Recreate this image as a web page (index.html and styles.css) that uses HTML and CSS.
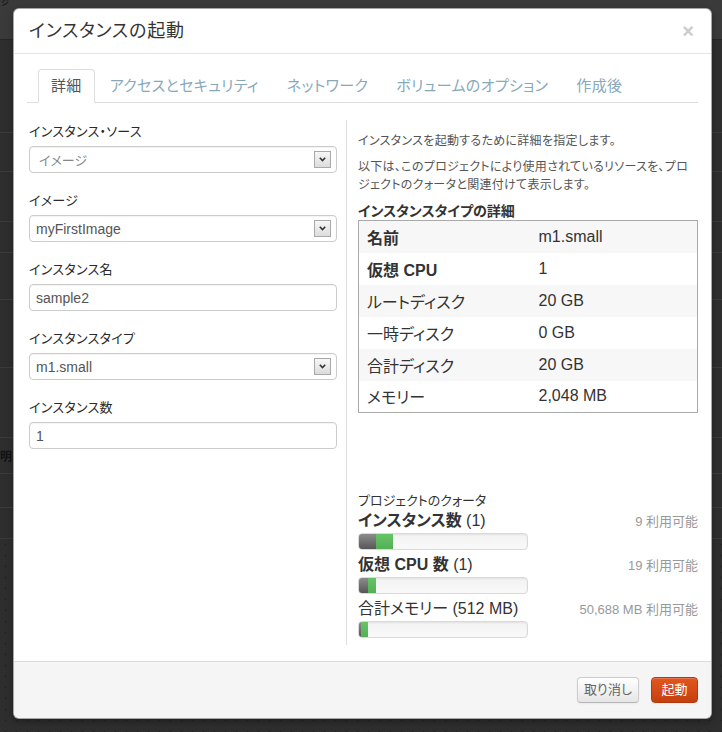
FILE: index.html
```html
<!DOCTYPE html>
<html lang="ja">
<head>
<meta charset="utf-8">
<title>インスタンスの起動</title>
<link rel="stylesheet" href="styles.css">
</head>
<body>
<div class="page">
  <div class="page-head"><span class="page-head-title">ジ</span></div>
  <div class="page-row r1"></div>
  <div class="page-row r2"></div>
  <div class="page-row r3"></div>
  <div class="page-row r4"></div>
  <div class="page-row r5"></div>
  <div class="page-row r6"></div>
  <div class="page-row r7"></div>
  <div class="page-row r8"><span class="page-cell">明</span></div>
  <div class="page-row r9"></div>
  <div class="page-row r10"></div>
  <div class="page-dots"></div>
</div>

<div class="modal">
  <div class="modal-header">
    <h3 class="modal-title">インスタンスの起動</h3>
    <span class="close">×</span>
  </div>
  <div class="modal-body">
    <ul class="tabs">
      <li class="tab active">詳細</li>
      <li class="tab">アクセスとセキュリティ</li>
      <li class="tab">ネットワーク</li>
      <li class="tab">ボリュームのオプション</li>
      <li class="tab">作成後</li>
    </ul>
    <div class="tab-content">
      <div class="col-left">
        <div class="field">
          <label class="field-label">インスタンス・ソース</label>
          <div class="select"><span class="select-value muted">イメージ</span><span class="select-btn"><svg width="7" height="5" viewBox="0 0 7 5"><path d="M0.8 0.8 L3.5 3.6 L6.2 0.8" fill="none" stroke="#333" stroke-width="1.6"/></svg></span></div>
        </div>
        <div class="field">
          <label class="field-label">イメージ</label>
          <div class="select"><span class="select-value">myFirstImage</span><span class="select-btn"><svg width="7" height="5" viewBox="0 0 7 5"><path d="M0.8 0.8 L3.5 3.6 L6.2 0.8" fill="none" stroke="#333" stroke-width="1.6"/></svg></span></div>
        </div>
        <div class="field">
          <label class="field-label">インスタンス名</label>
          <input class="text-input" type="text" value="sample2">
        </div>
        <div class="field">
          <label class="field-label">インスタンスタイプ</label>
          <div class="select"><span class="select-value">m1.small</span><span class="select-btn"><svg width="7" height="5" viewBox="0 0 7 5"><path d="M0.8 0.8 L3.5 3.6 L6.2 0.8" fill="none" stroke="#333" stroke-width="1.6"/></svg></span></div>
        </div>
        <div class="field">
          <label class="field-label">インスタンス数</label>
          <input class="text-input" type="text" value="1">
        </div>
      </div>
      <div class="col-right">
        <p class="desc">インスタンスを起動するために詳細を指定します。</p>
        <p class="desc">以下は、このプロジェクトにより使用されているリソースを、プロ<br>ジェクトのクォータと関連付けて表示します。</p>
        <h4 class="detail-title">インスタンスタイプの詳細</h4>
        <table class="spec-table">
          <colgroup><col class="spec-col"><col></colgroup>
          <tr><th class="strong">名前</th><td>m1.small</td></tr>
          <tr><th class="strong">仮想 CPU</th><td>1</td></tr>
          <tr><th>ルートディスク</th><td>20 GB</td></tr>
          <tr><th>一時ディスク</th><td>0 GB</td></tr>
          <tr><th>合計ディスク</th><td>20 GB</td></tr>
          <tr><th>メモリー</th><td>2,048 MB</td></tr>
        </table>
        <div class="quota">
          <div class="quota-title">プロジェクトのクォータ</div>
          <div class="quota-item">
            <div class="quota-row"><span class="quota-label"><strong>インスタンス数</strong> (1)</span><span class="quota-avail">9 利用可能</span></div>
            <div class="bar"><span class="bar-used" style="width:17px"></span><span class="bar-new" style="width:17px"></span></div>
          </div>
          <div class="quota-item">
            <div class="quota-row"><span class="quota-label"><strong>仮想 CPU 数</strong> (1)</span><span class="quota-avail">19 利用可能</span></div>
            <div class="bar"><span class="bar-used" style="width:9px"></span><span class="bar-new" style="width:8px"></span></div>
          </div>
          <div class="quota-item">
            <div class="quota-row"><span class="quota-label">合計メモリー (512 MB)</span><span class="quota-avail">50,688 MB 利用可能</span></div>
            <div class="bar"><span class="bar-used" style="width:2px"></span><span class="bar-new" style="width:7px"></span></div>
          </div>
        </div>
      </div>
    </div>
  </div>
  <div class="modal-footer">
    <button class="btn btn-cancel" type="button">取り消し</button>
    <button class="btn btn-primary" type="button">起動</button>
  </div>
</div>
</body>
</html>
```

FILE: styles.css
```css
* { box-sizing: border-box; }

html, body {
  margin: 0;
  padding: 0;
}

body {
  position: relative;
  width: 722px;
  height: 732px;
  overflow: hidden;
  background: #2e2e2e;
  font-family: "Liberation Sans", "Noto Sans CJK JP", sans-serif;
  font-size: 13px;
  color: #333;
  font-feature-settings: "palt";
}

/* underlying page, dimmed */
.page {
  height: 732px;
  display: flex;
  flex-direction: column;
}
.page-head {
  height: 40px;
  background: #3a3a3a;
  border-bottom: 1px solid #262626;
  padding-left: 1px;
}
.page-head-title {
  display: block;
  font-size: 8px;
  line-height: 8px;
  color: #1c1c1c;
  font-weight: bold;
}
.page-row {
  border-bottom: 1px solid #3b3b3b;
  display: flex;
  align-items: center;
}
.r1 { height: 93px; }
.r2 { height: 39px; }
.r3 { height: 50px; }
.r4 { height: 31px; }
.r5 { height: 47px; }
.r6 { height: 68px; }
.r7 { height: 70px; }
.r8 { height: 36px; }
.r9 { height: 34px; }
.r10 { height: 31px; }
.page-cell {
  font-size: 12px;
  font-weight: bold;
  color: #121212;
  padding-left: 0;
}
.page-dots {
  flex: 1;
  background-image: radial-gradient(circle, #232323 0.8px, transparent 1.2px);
  background-size: 11px 11px;
}

/* modal */
.modal {
  position: absolute;
  left: 13px;
  top: 8px;
  width: 699px;
  height: 711px;
  background: #fff;
  border: 1px solid rgba(0, 0, 0, 0.35);
  border-radius: 6px;
  box-shadow: 0 3px 7px rgba(0, 0, 0, 0.3);
  display: flex;
  flex-direction: column;
}

.modal-header {
  height: 45px;
  padding: 0 15px;
  border-bottom: 1px solid #e5e5e5;
  display: flex;
  align-items: center;
  justify-content: space-between;
}
.modal-title {
  margin: 0;
  font-size: 18px;
  font-weight: normal;
  line-height: 30px;
  letter-spacing: 0.8px;
  color: #333;
}
.close {
  font-size: 20px;
  font-weight: bold;
  line-height: 20px;
  color: #000;
  opacity: 0.2;
  margin-right: 2px;
}

.modal-body {
  flex: 1;
  padding: 15px 13px 16px;
  display: flex;
  flex-direction: column;
}

.tabs {
  list-style: none;
  margin: 0;
  padding: 0 0 0 11px;
  display: flex;
  border-bottom: 1px solid #ddd;
}
.tab {
  margin-right: 2px;
  margin-bottom: -1px;
  padding: 7px 12px;
  line-height: 18px;
  font-size: 15px;
  letter-spacing: 0.35px;
  color: #87a9ba;
  border: 1px solid transparent;
  border-radius: 4px 4px 0 0;
}
.tab.active {
  color: #555;
  background: #fff;
  border-color: #ddd #ddd transparent;
}

.tab-content {
  flex: 1;
  margin-top: 17px;
  display: flex;
}

.col-left {
  width: 319px;
  padding: 2px 0 0 2px;
}
.field {
  width: 308px;
  margin-bottom: 18px;
}
.field-label {
  display: block;
  font-size: 13px;
  line-height: 20px;
  margin-bottom: 4px;
  letter-spacing: 0.3px;
  color: #2a2a2a;
}
.select {
  height: 27px;
  border: 1px solid #ccc;
  border-radius: 4px;
  background: #fff;
  display: flex;
  align-items: center;
  justify-content: space-between;
  padding-left: 6px;
  box-shadow: inset 0 1px 1px rgba(0, 0, 0, 0.05);
}
.select-value {
  font-size: 14px;
  color: #555;
}
.select-value.muted {
  font-size: 13px;
  color: #888;
  padding-left: 3px;
}
.select-btn {
  width: 17px;
  height: 17px;
  margin-right: 5px;
  border: 1px solid #a9a9a9;
  background: linear-gradient(#f7f7f7, #dcdcdc);
  display: flex;
  align-items: center;
  justify-content: center;
}
.select-btn svg { display: block; }

.text-input {
  display: block;
  width: 308px;
  height: 27px;
  margin: 0;
  padding: 0 6px;
  border: 1px solid #ccc;
  border-radius: 4px;
  font-family: inherit;
  font-size: 14px;
  color: #555;
  background: #fff;
  box-shadow: inset 0 1px 1px rgba(0, 0, 0, 0.05);
  outline: none;
}

.col-right {
  flex: 1;
  border-left: 1px solid #ddd;
  padding: 12px 0 7px 11px;
  display: flex;
  flex-direction: column;
}
.desc {
  margin: 0 0 8px;
  font-size: 12px;
  line-height: 18px;
  letter-spacing: 0.3px;
  white-space: nowrap;
  color: #555;
}
.detail-title {
  margin: 0;
  font-size: 14px;
  line-height: 18px;
  font-weight: bold;
  color: #333;
}
.spec-table {
  width: 100%;
  border-collapse: collapse;
  border: 1px solid #aaa;
  font-size: 16px;
}
.spec-col { width: 172px; }
.spec-table tr { height: 32px; }
.spec-table tr:nth-child(odd) { background: #f7f7f7; }
.spec-table th,
.spec-table td {
  padding: 0 8px;
  text-align: left;
  font-weight: normal;
  color: #333;
}
.spec-table th.strong { font-weight: bold; }

.quota {
  margin-top: auto;
}
.quota-title {
  font-size: 13px;
  line-height: 16px;
  margin-bottom: 1px;
  color: #333;
}
.quota-item + .quota-item { margin-top: 4px; }
.quota-row {
  display: flex;
  justify-content: space-between;
  align-items: baseline;
  line-height: 22px;
}
.quota-label {
  font-size: 16px;
  color: #333;
}
.quota-avail {
  font-size: 13px;
  color: #999;
}
.bar {
  width: 170px;
  height: 17px;
  border: 1px solid #d9d9d9;
  border-radius: 4px;
  background: linear-gradient(#f3f3f3, #f9f9f9);
  box-shadow: inset 0 1px 2px rgba(0, 0, 0, 0.08);
  display: flex;
  overflow: hidden;
}
.bar-used {
  height: 100%;
  background: linear-gradient(#8c8c8c, #575757);
}
.bar-new {
  height: 100%;
  background: linear-gradient(#66c466, #55b055);
}

.modal-footer {
  height: 57px;
  border-top: 1px solid #ddd;
  background: #f5f5f5;
  border-radius: 0 0 6px 6px;
  padding: 0 13px;
  display: flex;
  justify-content: flex-end;
  align-items: center;
  gap: 12px;
}
.btn {
  height: 26px;
  padding: 0 10px;
  font-family: inherit;
  font-size: 13px;
  line-height: 24px;
  color: #666;
  border: 1px solid #ccc;
  border-bottom-color: #b5b5b5;
  border-radius: 4px;
  background: linear-gradient(#ffffff, #e6e6e6);
  box-shadow: inset 0 1px 0 rgba(255, 255, 255, 0.2), 0 1px 2px rgba(0, 0, 0, 0.05);
}
.btn-cancel {
  width: 62px;
  padding: 0;
  letter-spacing: -1px;
  text-align: center;
}
.btn-primary {
  width: 47px;
  padding: 0;
  text-align: center;
  color: #fff;
  border-color: #b13a0d;
  background: linear-gradient(#e2561f, #c5400f);
}
```
